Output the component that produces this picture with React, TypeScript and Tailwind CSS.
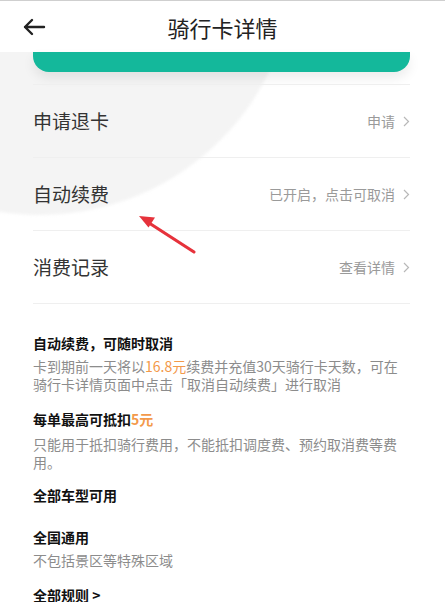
import React from "react";

const rows = [
  { label: "申请退卡", value: "申请" },
  { label: "自动续费", value: "已开启，点击可取消" },
  { label: "消费记录", value: "查看详情" },
];

function Chevron() {
  return (
    <svg width="7" height="11" viewBox="0 0 7 11" className="ml-[8px]">
      <path d="M1 1l4.5 4.5L1 10" fill="none" stroke="#b8b8b8" strokeWidth="1.2" />
    </svg>
  );
}

export default function App() {
  return (
    <div className="relative h-[602px] w-[445px] overflow-hidden bg-white font-['Noto_Sans_CJK_SC','Noto_Sans',sans-serif]">
      {/* soft grey disc behind the top of the page */}
      <div className="absolute left-[-215px] top-[-295px] h-[510px] w-[510px] rounded-full bg-[#f4f4f4] blur-[1.5px]" />

      <header className="relative z-10 flex h-[52px] items-center border-t border-[#cfcfcf] bg-white">
        <svg width="24" height="18" viewBox="0 0 24 18" className="ml-[22px]">
          <path d="M22 9H3M10 2L3 9l7 7" fill="none" stroke="#222" strokeWidth="2.4" strokeLinecap="round" strokeLinejoin="round" />
        </svg>
        <div className="absolute inset-x-0 text-center text-[22px] leading-[28px] text-[#222]">骑行卡详情</div>
      </header>

      <div className="relative z-10 pl-[33px] pr-[35px]">
        <div className="h-[20px] rounded-b-[16px] bg-[#14b89b] shadow-[0_6px_12px_rgba(0,0,0,0.08)]" />

        <div className="mt-[12px]">
          {rows.map((r) => (
            <div key={r.label} className="flex h-[73px] items-center justify-between border-t border-[#efefef]">
              <span className="text-[19px] text-[#333]">{r.label}</span>
              <span className="flex items-center text-[14px] text-[#9a9a9a]">
                {r.value}
                <Chevron />
              </span>
            </div>
          ))}
          <div className="border-t border-[#efefef]" />
        </div>

        <div className="pt-[28px] text-[14px] leading-[18px]">
          <div className="text-[14px] leading-[22px] font-bold text-[#111]">自动续费，可随时取消</div>
          <p className="mt-[3px] text-[#8c8c8c]">
            卡到期前一天将以<span className="text-[#f3994a]">16.8元</span>续费并充值30天骑行卡天数，可在骑行卡详情页面中点击「取消自动续费」进行取消
          </p>

          <div className="mt-[15px] text-[14px] leading-[22px] font-bold text-[#111]">
            每单最高可抵扣<span className="text-[#f3994a]">5元</span>
          </div>
          <p className="mt-[5px] text-[#8c8c8c]">只能用于抵扣骑行费用，不能抵扣调度费、预约取消费等费用。</p>

          <div className="mt-[13px] text-[14px] leading-[22px] font-bold text-[#111]">全部车型可用</div>

          <div className="mt-[20px] text-[14px] leading-[22px] font-bold text-[#111]">全国通用</div>
          <p className="mt-[3px] text-[#8c8c8c]">不包括景区等特殊区域</p>

          <div className="mt-[15px] text-[14px] leading-[22px] font-bold text-[#111]">全部规则 &gt;</div>
        </div>
      </div>

      {/* red annotation arrow */}
      <svg className="absolute left-0 top-0 z-20" width="445" height="602" viewBox="0 0 445 602">
        <path d="M194 252L146 221" stroke="#e6323b" strokeWidth="3.2" strokeLinecap="round" />
        <path d="M139 216l16 1.5-6.5 10z" fill="#e6323b" />
      </svg>
    </div>
  );
}
